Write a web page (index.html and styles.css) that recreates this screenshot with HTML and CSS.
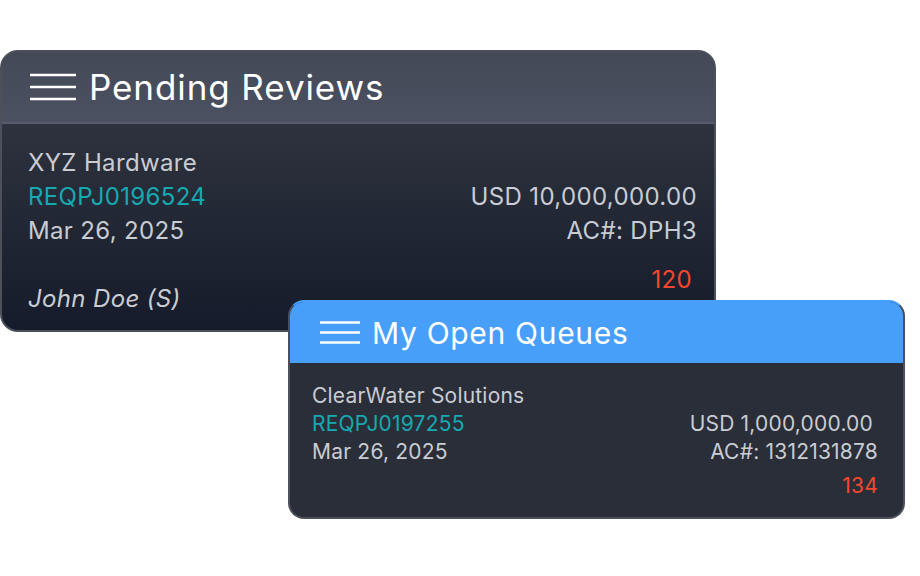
FILE: index.html
```html
<!DOCTYPE html>
<html lang="en">
<head>
    <meta charset="UTF-8">
    <meta name="viewport" content="width=device-width, initial-scale=1.0">
    <title>Queues</title>
    <link rel="stylesheet" href="styles.css">
</head>
<body>

    <div class="stage">

        <!-- Pending reviews -->
        <div class="card card-pending">
            <div class="card-head">
                <svg class="menu-icon" width="46" height="28" viewBox="0 0 46 28">
                    <path d="M0 2H46M0 14H46M0 26H46" stroke="#fff" stroke-width="2.6" fill="none"/>
                </svg>
                <span class="card-title">Pending Reviews</span>
            </div>
            <div class="card-body">
                <div class="col">
                    <div>XYZ Hardware</div>
                    <div class="ref">REQPJ0196524</div>
                    <div>Mar 26, 2025</div>
                    <div class="gap">&nbsp;</div>
                    <div class="owner">John Doe (S)</div>
                </div>
                <div class="col col-right">
                    <div>&nbsp;</div>
                    <div>USD 10,000,000.00</div>
                    <div>AC#: DPH3</div>
                    <div class="count">120</div>
                </div>
            </div>
        </div>

        <!-- My open queues -->
        <div class="card card-queues">
            <div class="card-head">
                <svg class="menu-icon" width="40" height="23" viewBox="0 0 40 23">
                    <path d="M0 1.5H40M0 11.5H40M0 21.5H40" stroke="#fff" stroke-width="2.4" fill="none"/>
                </svg>
                <span class="card-title">My Open Queues</span>
            </div>
            <div class="card-body">
                <div class="col">
                    <div>ClearWater Solutions</div>
                    <div class="ref">REQPJ0197255</div>
                    <div>Mar 26, 2025</div>
                </div>
                <div class="col col-right">
                    <div>&nbsp;</div>
                    <div class="amount">USD 1,000,000.00</div>
                    <div>AC#: 1312131878</div>
                    <div class="count">134</div>
                </div>
            </div>
        </div>

    </div>

</body>
</html>
```

FILE: styles.css
```css
body {
    margin: 0;
    background-color: #fff;
    font-family: Inter, "Liberation Sans", sans-serif;
    color: #c9ccd3;
}

.stage {
    padding-top: 50px;
}

.card {
    border: 2px solid #4b505b;
    border-radius: 18px;
    overflow: hidden;
    box-sizing: border-box;
}

.card-head {
    display: flex;
    align-items: center;
    color: #fff;
}

.card-body {
    display: flex;
    justify-content: space-between;
}

.col-right {
    text-align: right;
}

.ref {
    color: #17a9b1;
}

.owner {
    font-style: italic;
}

.count {
    color: #f5472f;
}

/* Pending reviews */
.card-pending {
    width: 716px;
    height: 282px;
    background: linear-gradient(#373b46, #151b2a);
}

.card-pending .card-head {
    height: 70px;
    padding-left: 28px;
    background: linear-gradient(#434956, #4b5161);
    border-bottom: 2px solid #565c69;
}

.card-pending .menu-icon {
    margin-right: 13px;
}

.card-pending .card-title {
    font-size: 35px;
    letter-spacing: 0.9px;
}

.card-pending .card-body {
    padding: 22px 17px 0 26px;
    font-size: 24px;
    line-height: 34px;
    letter-spacing: 0.35px;
}

.card-pending .count {
    margin-top: 15px;
    padding-right: 5px;
}

/* My open queues */
.card-queues {
    position: relative;
    width: 617px;
    height: 219px;
    margin: -32px 0 0 288px;
    border-radius: 16px;
    border-top-color: #479ffa;
    background-color: #2a2e38;
}

.card-queues .card-head {
    height: 61px;
    padding-left: 30px;
    background-color: #479ffa;
}

.card-queues .menu-icon {
    margin-right: 12px;
}

.card-queues .card-title {
    font-size: 30px;
    letter-spacing: 0.7px;
}

.card-queues .card-body {
    padding: 19px 25px 0 22px;
    font-size: 21px;
    line-height: 28px;
    letter-spacing: 0.2px;
}

.card-queues .amount {
    padding-right: 5px;
}

.card-queues .count {
    margin-top: 6px;
}
```
